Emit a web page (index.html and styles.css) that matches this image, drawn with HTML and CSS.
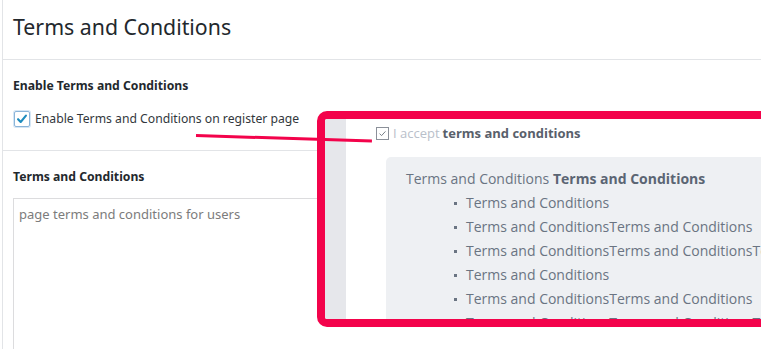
FILE: index.html
```html
<!DOCTYPE html>
<html lang="en">
<head>
  <meta charset="UTF-8">
  <meta name="viewport" content="width=device-width, initial-scale=1.0">
  <title>Terms and Conditions</title>
  <link rel="stylesheet" href="styles.css">
</head>
<body>
  <div class="page">
    <header class="page-head">
      <h1>Terms and Conditions</h1>
    </header>

    <section class="field">
      <h2>Enable Terms and Conditions</h2>
      <label class="check">
        <span class="check-box">
          <svg viewBox="0 0 16 16" width="16" height="16"><path d="M3.5 8.2l3 3.2 6-7.2" fill="none" stroke="#1e8cbe" stroke-width="2.4" stroke-linecap="round" stroke-linejoin="round"/></svg>
        </span>
        <span>Enable Terms and Conditions on register page</span>
      </label>
    </section>

    <section class="field">
      <h2>Terms and Conditions</h2>
      <textarea class="terms-input" placeholder="page terms and conditions for users"></textarea>
    </section>

    <!-- preview callout drawn over the settings -->
    <div class="pointer"></div>
    <div class="callout">
      <div class="callout-strip"></div>
      <div class="callout-body">
        <div class="accept">
          <span class="accept-box">
            <svg viewBox="0 0 13 13" width="13" height="13"><path d="M3 6.6l2.4 2.4 4.6-5" fill="none" stroke="#6f7680" stroke-width="1.1"/></svg>
          </span>
          <span class="accept-muted">I accept</span>
          <b>terms and conditions</b>
        </div>
        <div class="terms-box">
          <p>Terms and Conditions <b>Terms and Conditions</b></p>
          <ul>
            <li>Terms and Conditions</li>
            <li>Terms and ConditionsTerms and Conditions</li>
            <li>Terms and ConditionsTerms and ConditionsTerms and Conditions</li>
            <li>Terms and Conditions</li>
            <li>Terms and ConditionsTerms and Conditions</li>
            <li>Terms and ConditionsTerms and ConditionsTerms and Conditions</li>
          </ul>
        </div>
      </div>
    </div>
  </div>
</body>
</html>
```

FILE: styles.css
```css
html, body {
  margin: 0;
  padding: 0;
  background: #fff;
  overflow: hidden;
}
body {
  font-family: 'Noto Sans', 'Open Sans', sans-serif;
  color: #23282d;
  height: 349px;
}
.page {
  position: relative;
  margin-left: 2px;
  border-left: 1px solid #e2e4e7;
  height: 349px;
  overflow: hidden;
}
.page-head {
  height: 60px;
  border-bottom: 1px solid #e2e4e7;
  padding-left: 10px;
  box-sizing: border-box;
}
.page-head h1 {
  margin: 0;
  padding-top: 11px;
  font-size: 21.3px;
  font-weight: 400;
  line-height: 32px;
  color: #23282d;
}
.field {
  padding: 16px 10px 21px;
  border-bottom: 1px solid #e2e4e7;
}
.field h2 {
  margin: 0 0 13px;
  font-size: 12.2px;
  font-weight: 700;
  line-height: 20px;
}
.check {
  display: flex;
  align-items: center;
  gap: 5px;
  font-size: 12.2px;
  line-height: 20px;
  color: #32373c;
}
.check-box {
  width: 16px;
  height: 16px;
  margin-left: 1px;
  border: 1px solid #8ab4d9;
  border-radius: 2px;
  box-sizing: border-box;
  display: flex;
  align-items: center;
  justify-content: center;
  box-shadow: 0 0 0 1px #d5e6f5;
}
.check-box svg {
  width: 14px;
  height: 14px;
}
.field:last-of-type {
  border-bottom: none;
  padding-bottom: 0;
}
.field:last-of-type h2 {
  margin-bottom: 11px;
}
.terms-input {
  display: block;
  width: 790px;
  height: 200px;
  margin: 0;
  padding: 5px 5px;
  border: 1px solid #dcdcde;
  font-family: inherit;
  font-size: 13px;
  line-height: 20px;
  resize: none;
  box-sizing: border-box;
}
.terms-input::placeholder {
  color: #7c7c7c;
}

/* annotation overlay */
.pointer {
  position: absolute;
  left: 193px;
  top: 134px;
  width: 176px;
  height: 3px;
  background: #f3034b;
  transform: rotate(1.8deg);
  transform-origin: left center;
  z-index: 2;
}
.callout {
  position: absolute;
  left: 314px;
  top: 111px;
  width: 470px;
  height: 216px;
  border: 8px solid #f3034b;
  border-radius: 10px;
  box-sizing: border-box;
  display: flex;
  overflow: hidden;
  background: #fff;
  z-index: 1;
}
.callout-strip {
  width: 21px;
  flex: none;
  background: #e6e7eb;
}
.callout-body {
  flex: 1;
  padding: 6px 0 0 30px;
  font-family: 'Open Sans', sans-serif;
  white-space: nowrap;
}
.accept {
  display: flex;
  align-items: center;
  gap: 3px;
  font-size: 13px;
  line-height: 16px;
  color: #59606b;
}
.accept-box {
  width: 13px;
  height: 13px;
  border: 1px solid #8b9099;
  box-sizing: border-box;
  display: flex;
  margin-right: 1px;
}
.accept-box svg {
  width: 11px;
  height: 11px;
}
.accept-muted {
  color: #b9c0ca;
}
.accept b {
  font-weight: 700;
}
.terms-box {
  margin: 16px 0 0 10px;
  padding: 10px 0 0 20px;
  background: #eef0f3;
  border-radius: 5px 0 0 0;
  height: 200px;
  font-size: 14px;
  line-height: 24px;
  color: #6a7482;
}
.terms-box p {
  margin: 0;
}
.terms-box b {
  color: #5b6573;
}
.terms-box ul {
  margin: 0;
  padding-left: 60px;
  list-style: none;
}
.terms-box li {
  position: relative;
}
.terms-box li::before {
  content: "";
  position: absolute;
  left: -12px;
  top: 11px;
  width: 3px;
  height: 3px;
  background: #6a7482;
}
```
